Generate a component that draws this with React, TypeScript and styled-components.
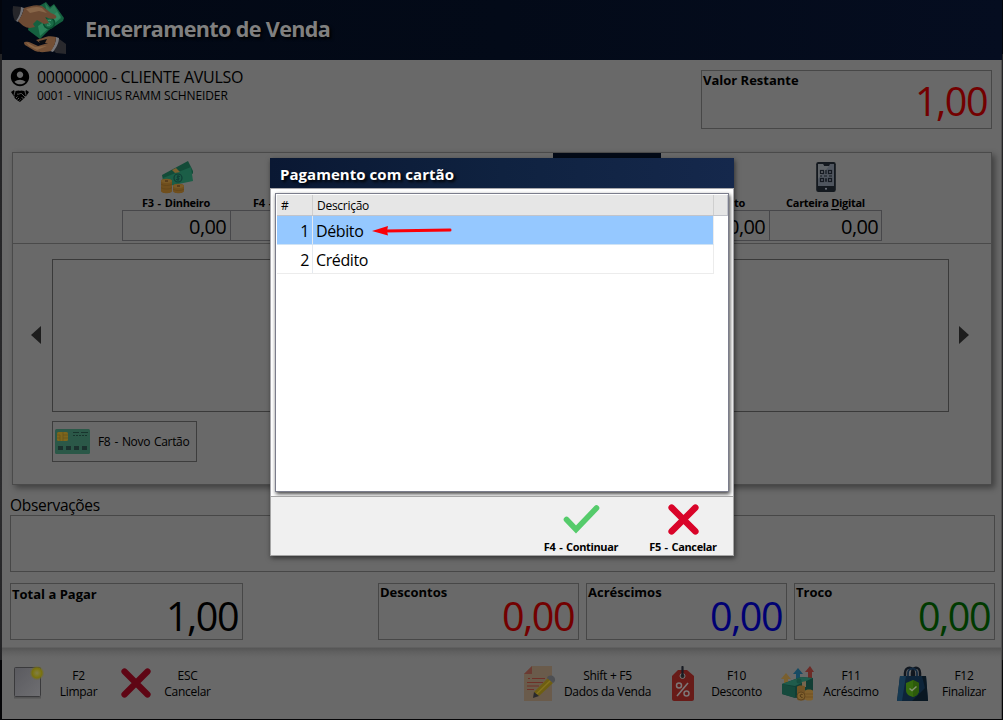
import React from 'react';
import styled, { createGlobalStyle } from 'styled-components';
import { MdAccountCircle } from 'react-icons/md';

const GlobalStyle = createGlobalStyle`
  * {
    box-sizing: border-box;
  }
  body {
    margin: 0;
    background: #000;
    font-family: 'Open Sans', 'Noto Sans', sans-serif;
    overflow: hidden;
  }
  svg {
    display: block;
  }
`;

// Window frame
const Frame = styled.div`
  position: relative;
  width: 1003px;
  height: 720px;
  padding: 0 1px 1px 2px;
  background: linear-gradient(#02050d 54px, #232325 54px, #2b2b2d 500px, #232325 660px, #050507 660px);
`;

const Screen = styled.div`
  display: flex;
  flex-direction: column;
  height: 719px;
  background: #696969;
  color: #000;
  border-right: 1px solid #515151;
`;

const Header = styled.header`
  display: flex;
  align-items: center;
  flex: none;
  height: 60px;
  width: 1000px;
  padding-left: 10px;
  background: linear-gradient(90deg, #020814, #030a18 50%, #050d20);
`;

const Title = styled.h1`
  margin: -3px 0 0 18px;
  font-size: 21.6px;
  line-height: 30px;
  letter-spacing: -0.66px;
  font-weight: 700;
  color: #808080;
  text-shadow: 2px 2px 3px #000;
`;

const Content = styled.main`
  flex: none;
  height: 588px;
  padding: 5px 5px 0 8px;
  border-bottom: 1px solid #606060;
`;

const TopRow = styled.div`
  display: flex;
  justify-content: space-between;
  height: 87px;
  padding-right: 4px;
`;

const PersonLine = styled.div<{ $size: number; $height: number; $spacing: number }>`
  display: flex;
  align-items: center;
  height: ${(p) => p.$height}px;
  font-size: ${(p) => p.$size}px;
  letter-spacing: ${(p) => p.$spacing}px;
  white-space: nowrap;
`;

const PersonIcon = styled.span`
  display: flex;
  justify-content: center;
  width: 20px;
  margin-right: 7px;

  svg {
    flex: none;
  }
`;

const MoneyBox = styled.div<{ $width: number }>`
  display: flex;
  justify-content: space-between;
  width: ${(p) => p.$width}px;
  height: 57px;
  padding: 0 4px 0 1px;
  border: 1px solid #474747;
`;

const RemainingBox = styled(MoneyBox)`
  height: 59px;
  margin-top: 5px;
`;

const MoneyLabel = styled.span<{ $top?: number }>`
  margin-top: ${(p) => p.$top ?? 0}px;
  font-size: 13px;
  line-height: 17px;
  font-weight: 700;
  white-space: nowrap;
`;

const MoneyValue = styled.span<{ $color?: string; $top?: number }>`
  margin-top: ${(p) => p.$top ?? 7}px;
  font-size: 39.5px;
  line-height: 50px;
  letter-spacing: -1.5px;
  color: ${(p) => p.$color ?? '#000'};
`;

const Panel = styled.section`
  width: 980px;
  height: 333px;
  margin-left: 2px;
  border: 1px solid #4a4a4a;
  box-shadow: 3px 3px 6px rgba(0, 0, 0, 0.4);
`;

const Methods = styled.div`
  display: flex;
  height: 91px;
  padding-left: 109px;
  border-bottom: 1px solid #4a4a4a;
`;

const Method = styled.div<{ $width?: number; $active?: boolean }>`
  display: flex;
  flex-direction: column;
  flex: none;
  width: ${(p) => p.$width ?? 108}px;
  height: 88px;
  padding-top: 3px;
  border-top: 5px solid ${(p) => (p.$active ? '#030a17' : 'transparent')};
`;

const MethodIcon = styled.div`
  display: flex;
  justify-content: center;
  height: 33px;
`;

const MethodName = styled.div<{ $align?: string }>`
  height: 16px;
  padding: 0 24px 0 23px;
  font-size: 11px;
  line-height: 17px;
  font-weight: 700;
  letter-spacing: -0.3px;
  word-spacing: 1.4px;
  text-align: ${(p) => p.$align ?? 'center'};
  white-space: nowrap;
`;

const WideName = styled(MethodName)<{ $words?: number }>`
  padding: 0;
  word-spacing: ${(p) => p.$words ?? 0}px;

  u {
    text-underline-offset: 2px;
  }
`;

const MethodValue = styled.div<{ $last?: boolean }>`
  height: 31px;
  margin-right: ${(p) => (p.$last ? 0 : -1)}px;
  padding-right: ${(p) => (p.$last ? 3 : 4)}px;
  border: 1px solid #47474a;
  font-size: 20px;
  line-height: 32px;
  letter-spacing: -0.65px;
  text-align: right;
`;

const CardsRow = styled.div`
  display: flex;
  align-items: center;
  padding: 15px 22px 0 18px;

  svg {
    margin-bottom: 2px;
  }
`;

const CardList = styled.div`
  width: 897px;
  height: 153px;
  margin: 0 10px 0 11px;
  border: 1px solid #3a3a3a;
`;

const NewCardButton = styled.button`
  display: flex;
  align-items: center;
  width: 145px;
  height: 41px;
  margin: 9px 0 0 39px;
  padding: 0 0 0 2px;
  gap: 8px;
  border: 1px solid #3d3d3d;
  background: none;
  color: #000;
  font-family: inherit;
  font-size: 12px;
  letter-spacing: -0.33px;
  word-spacing: 1.2px;
  white-space: nowrap;
`;

const NotesLabel = styled.label`
  display: block;
  height: 30px;
  padding-top: 9px;
  font-size: 15.5px;
  line-height: 23px;
  letter-spacing: -0.3px;
`;

const Notes = styled.div`
  width: 985px;
  height: 57px;
  border: 1px solid #474747;
`;

const Totals = styled.div`
  display: flex;
  gap: 7px;
  margin-top: 11px;
`;

const Spacer = styled.div<{ $width: number }>`
  width: ${(p) => p.$width}px;
`;

const Footer = styled.footer`
  display: flex;
  flex: 1;
  padding: 18px 0 0 11px;
  background: linear-gradient(#555 0, #606060 4px, #686868 9px, #696969 12px);
`;

const FootButton = styled.div<{ $gap?: number }>`
  display: flex;
  align-items: flex-start;
  height: 37px;
  margin-left: ${(p) => p.$gap ?? 0}px;
`;

const FootIcon = styled.div<{ $width: number; $top?: number }>`
  width: ${(p) => p.$width}px;
  padding-top: ${(p) => p.$top ?? 0}px;
`;

const FootText = styled.div<{ $width: number }>`
  width: ${(p) => p.$width}px;
  margin-top: 2px;
  font-size: 12px;
  line-height: 16px;
  letter-spacing: -0.28px;
  text-align: center;
  white-space: nowrap;
`;

// Dialog
const Dialog = styled.div`
  position: absolute;
  left: 270px;
  top: 158px;
  display: flex;
  flex-direction: column;
  width: 464px;
  height: 398px;
  background: #fff;
  box-shadow: 1px 2px 5px rgba(0, 0, 0, 0.55);
`;

const DialogTitle = styled.div`
  height: 30px;
  padding-left: 10px;
  background: linear-gradient(90deg, #0a1833, #0f2240 50%, #15284c);
  color: #fff;
  font-size: 15px;
  line-height: 32px;
  letter-spacing: 0.04px;
  font-weight: 700;
  text-shadow: 2px 2px 3px #000;
`;

const DialogBody = styled.div`
  height: 309px;
  padding: 4px 4px 0;
  border: 1px solid #a8a8ac;
  border-bottom: 0;
`;

const Grid = styled.div`
  width: 454px;
  height: 299px;
  padding: 1px;
  border: 1px solid #7b7d8c;
  background: #fff;
  box-shadow: 1px 2px 4px rgba(0, 0, 0, 0.75);
`;

const GridHead = styled.div`
  display: grid;
  grid-template-columns: 36px 401px 14px;
  height: 21px;
  width: 451px;
  border-bottom: 1px solid #c2c4ca;
  border-right: 1px solid #c2c4ca;
  background: #e6e6e6;
  font-size: 12px;
  line-height: 22px;
  letter-spacing: -0.28px;
`;

const HeadCell = styled.div`
  height: 20px;
  padding-left: 4px;
  border-right: 1px solid #cfcfcf;

  &:last-child {
    border-right: 0;
  }
`;

const GridRow = styled.div<{ $selected?: boolean }>`
  display: grid;
  grid-template-columns: 36px 401px;
  width: 437px;
  height: 29px;
  background: ${(p) => (p.$selected ? '#95c8ff' : '#fff')};
  border-bottom: 1px solid ${(p) => (p.$selected ? '#cfe3f5' : '#ececec')};
  border-right: 1px solid #ececec;
  font-size: 16px;
  line-height: 31px;
  letter-spacing: -0.4px;
`;

const NumberCell = styled.div`
  height: 28px;
  padding-right: 3px;
  border-right: 1px solid #e4e9ef;
  text-align: right;
`;

const TextCell = styled.div`
  height: 28px;
  padding-left: 3px;
`;

const DialogFooter = styled.div`
  display: flex;
  flex: 1;
  justify-content: flex-end;
  border: 1px solid #a5a5a5;
  background: #f0f0f0;
`;

const DialogAction = styled.div`
  display: flex;
  flex-direction: column;
  align-items: center;
  width: 102px;
  margin-right: -1px;
  padding-top: 6px;
  font-size: 11px;
  line-height: 16px;
  font-weight: 700;
  letter-spacing: -0.35px;
  word-spacing: 1.2px;
  white-space: nowrap;

  &:first-child {
    margin-right: 0;
  }
`;

const ActionIcon = styled.div`
  display: flex;
  align-items: center;
  height: 32px;
  margin-bottom: 4px;
`;

const Pointer = styled.svg`
  position: absolute;
  left: 101px;
  top: 66px;
`;

const HandsLogo = () => (
  <svg width="55" height="56" viewBox="0 0 55 56">
    <path d="M20 8 34 0l4 5 4-3 10 14-1 3-14 9-9 9-12-9z" fill="#15603f" />
    <path d="M33 1l5 6 4-4 7 12-12 8z" fill="#2a7a55" />
    <path d="M26 24l10-7 9-7 4 6-12 10-9 8z" fill="#349167" opacity=".7" />
    <circle cx="37" cy="21" r="5.5" fill="#1a6b47" stroke="#0b4d30" strokeWidth="1.5" />
    <path d="M39 18.500c-4-1-4 2-2 2.500s2 3-2 2" fill="none" stroke="#4d9c7a" />
    <path d="M1 4l9 1-2 12-5 2c-2-4-3-9-2-15z" fill="#26262a" />
    <path d="M9 5l3 1c-1 5-3 9-6 14l-2-1c3-4 5-9 5-14z" fill="#707075" />
    <path d="M12 6c6-2 12-4 18-2l9 7c5 2 6 3 5 5-3 2-8 0-11-1l4 6-5 1-7-4-4 4 2 3-5 1c-5 0-8-3-12-7 3-4 5-8 6-13z" fill="#6c4a33" />
    <path d="M14 7c7-2 11-3 16-1l5 5-8-2-9 2z" fill="#876548" />
    <path d="M46 36l8 6v10l-10-1-4-4c3-3 5-7 6-11z" fill="#29292d" />
    <path d="M44 35l3 1c0 5-3 10-6 14l-3-1c4-4 6-9 6-14z" fill="#77777b" />
    <path d="M44 35c-5-1-9-1-13 1l-7 2 4 3 8 0-10 3-9-4c-5-1-6 0-4 3l10 6c6 2 11 1 16 0 3-4 5-9 5-14z" fill="#735036" />
    <path d="M14 40l9 5 12-1-10 4-8-4z" fill="#977150" opacity=".65" />
    <path d="M27 39l8-2-2 4-5 1z" fill="#080b10" />
  </svg>
);

const HandshakeIcon = () => (
  <svg width="18" height="13" viewBox="0 0 18 13">
    <path d="M0 3 3 1l2 5-2 1.500zM18 3l-3-2-2 5 2 1.500z" fill="#000" />
    <path d="M4.500 2 8 1.500l1 .5 1-.5 3.500.5 1 4.500-1 2.500-3.500 3L9 13l-2.500-1.500L3.500 9l0-3z" fill="#000" />
    <path d="M3.800 2.500 3 6.500M14.200 2.500l.8 4" stroke="#696969" strokeWidth=".8" />
    <path d="M6 5c1.500 1 3-1 4.500-.5L14 8M5 9l1.500-1.500M6.500 10.500 8 9M8.500 11.500l1-1M10.500 8l2 2" fill="none" stroke="#696969" strokeWidth=".8" />
  </svg>
);

const CashIcon = () => (
  <svg width="34" height="33" viewBox="-1 0 34 33">
    <path d="M2 14 28 0l6 12-30 13z" fill="#134b38" />
    <path d="M3 17 31 6l2 14-29 6z" fill="#1b5e47" />
    <circle cx="18" cy="17" r="4" fill="none" stroke="#103d35" strokeWidth="1.200" />
    <path d="M20 15.500c-3-1-4 1-2 1.500s2 2-2 1.500M18 14v6" fill="none" stroke="#103d35" />
    <path d="M12 9l4-2 4 4-5 1z" fill="#7c602f" />
    <path d="M1 20c0-3 11-3 11 0v10c0 3-11 3-11 0z" fill="#704f1d" />
    <ellipse cx="6.500" cy="20" rx="5.500" ry="2" fill="#7a5a26" />
    <path d="M1 23c2 2 9 2 11 0M1 26.500c2 2 9 2 11 0" fill="none" stroke="#604418" strokeWidth=".7" />
    <path d="M13 25c0-3 11-3 11 0v5c0 3-11 3-11 0z" fill="#704f1d" />
    <ellipse cx="18.500" cy="25" rx="5.500" ry="2" fill="#7a5a26" />
    <path d="M13 28c2 2 9 2 11 0" fill="none" stroke="#604418" strokeWidth=".7" />
    <path d="M5 20h3M17 25h3" stroke="#503619" strokeWidth="1.500" />
  </svg>
);

const PhoneIcon = () => (
  <svg width="20" height="31" viewBox="0 -1 20 31">
    <rect x=".2" width="19.600" height="30" rx="2.200" fill="#14191f" />
    <path d="M2 2h5l1 2h5l1-2h4v22H2z" fill="#50565f" />
    <path d="M2 2h5l1 2h5l-11 13z" fill="#606468" />
    <g fill="none" stroke="#151a21" strokeWidth="1.200">
      <rect x="4.500" y="8.500" width="3" height="3" />
      <rect x="12.500" y="8.500" width="3" height="3" />
      <rect x="4.500" y="16.500" width="3" height="3" />
      <rect x="12.500" y="16.500" width="3" height="3" />
      <path d="M10 8v4M8 14h3M4 14h2M13 14h3M10 16v4M9 18h2" />
    </g>
    <circle cx="10" cy="26.700" r="1" fill="#727780" />
  </svg>
);

const CardIcon = () => (
  <svg width="35" height="25" viewBox="0 0 35 25">
    <rect width="35" height="25" rx="1.500" fill="#2b5848" />
    <rect x="2" y="3" width="11" height="9" rx="1.500" fill="#7d661c" />
    <path d="M2 6h3v6M2 9h3M8 3v9M8 6h5M8 9h5" fill="none" stroke="#64511a" strokeWidth=".7" />
    <path d="M18 3.500h6M26 3.500h7" stroke="#18342d" />
    <path d="M18 6.500h15" stroke="#18342d" strokeDasharray="2 1" />
    <path d="M3 17h5v4H3zM11 17h5v4h-5zM19 17h5v4h-5zM27 17h5v4h-5z" fill="#1b312e" />
  </svg>
);

const CrossIcon = ({ color, size }: { color: string; size: number }) => (
  <svg width={size} height={size} viewBox="0 0 30 30">
    <path d="M3.500 3.500l23 23M26.500 3.500l-23 23" stroke={color} strokeWidth="6.200" strokeLinecap="round" />
  </svg>
);

const CheckIcon = () => (
  <svg width="37" height="30" viewBox="0 0 37 30">
    <path d="M3.500 15.500 13 25.500 33.500 4" fill="none" stroke="#55cb6b" strokeWidth="5.600" strokeLinecap="round" />
  </svg>
);

const ClearIcon = () => (
  <svg width="31" height="34" viewBox="0 0 31 34">
    <defs>
      <linearGradient id="paper" x1="0" y1="0" x2="1" y2="1">
        <stop offset="0" stopColor="#5a5a5f" />
        <stop offset="1" stopColor="#6f6f72" />
      </linearGradient>
      <radialGradient id="glow">
        <stop offset="0" stopColor="#807e4a" />
        <stop offset=".3" stopColor="#7f7a2a" />
        <stop offset=".65" stopColor="#79720c" />
        <stop offset="1" stopColor="#6f6a38" stopOpacity="0" />
      </radialGradient>
    </defs>
    <path d="M1 31.500h27" stroke="#555" strokeWidth="2" />
    <rect x="1.500" y="1.500" width="26" height="29" rx="1" fill="url(#paper)" stroke="#3a3a3c" />
    <circle cx="24" cy="7" r="7.500" fill="url(#glow)" />
  </svg>
);

const NoteIcon = () => (
  <svg width="32" height="35" viewBox="0 0 32 35">
    <path d="M8 0h20v35H0V8z" fill="#6a5b4b" />
    <path d="M8 0v8H0z" fill="#6b3b33" />
    <path d="M4 12.500h2M8 12.500h13M3 16.500h16M3 20h12M3 23.500h7" stroke="#6e3027" strokeWidth="1.200" />
    <path d="M10 26 24 12l5 5-14 13z" fill="#6e5e12" />
    <path d="M12.500 28 26.500 14.500" stroke="#85731c" strokeWidth="1.500" />
    <path d="M10 26l-1 6 6-2z" fill="#29292c" />
    <path d="M23 12c1-3 5-3 7-1s1 5-1 6z" fill="#4d4f53" />
  </svg>
);

const TagIcon = () => (
  <svg width="24" height="35" viewBox="0 0 24 35">
    <path d="M7 4h9l7 6v23c0 1-1 2-2 2H3c-1 0-2-1-2-2V10z" fill="#681b18" />
    <circle cx="11.500" cy="10" r="2.500" fill="#222" stroke="#7c7777" />
    <path d="M11.500 1v8" stroke="#181b23" strokeWidth="2.200" strokeLinecap="round" />
    <path d="M17 17 6 30" stroke="#7d7777" strokeWidth="1.600" />
    <circle cx="8" cy="19.500" r="2.500" fill="none" stroke="#7d7777" strokeWidth="1.500" />
    <circle cx="15.500" cy="27.500" r="2.500" fill="none" stroke="#7d7777" strokeWidth="1.500" />
  </svg>
);

const RaiseIcon = () => (
  <svg width="34" height="35" viewBox="0 0 34 35">
    <path d="M0 13l5-6 5 6H7v8H3V13z" fill="#7a602f" />
    <path d="M12 8l5-6 5 6h-3v9h-4V8z" fill="#174b64" />
    <path d="M24 6l5-6 4 6h-2v11h-4V6z" fill="#6d2b26" />
    <path d="M1 18 20 11l12 1v15L15 32 1 28z" fill="#123e35" />
    <path d="M1 18 20 11l12 1-18 8z" fill="#205c4c" />
    <path d="M1 18l13 3v11L1 28z" fill="#164a3d" />
    <circle cx="18" cy="15" r="2.500" fill="#184e40" />
    <path d="M21 16l4-1v6h-4z" fill="#77664f" />
    <path d="M16 21c0-2 8-2 8 0v12c0 2-8 2-8 0z" fill="#725325" />
    <path d="M24 25c0-2 8-2 8 0v8c0 2-8 2-8 0z" fill="#80602c" />
    <path d="M24 28h8M24 31h8" stroke="#6a4c20" strokeWidth=".7" />
    <circle cx="20" cy="30" r="4" fill="#80602c" stroke="#5a3f1a" strokeWidth=".8" />
    <path d="M21.500 28.500c-3-1-3 3 0 3" fill="none" stroke="#4a3214" />
  </svg>
);

const BagIcon = () => (
  <svg width="32" height="35" viewBox="0 0 32 35">
    <path d="M8 13V7c0-7 9-7 9 0v3M15 12V7c0-7 8-7 8 0v6" fill="none" stroke="#11171f" strokeWidth="2.500" />
    <path d="M11 13V7c0-6 9-6 9 0v5" fill="none" stroke="#132a41" strokeWidth="1.800" />
    <path d="M3 10h26l2 25H0z" fill="#0d2439" />
    <path d="M3 10h6L5 35H0z" fill="#153851" />
    <path d="M25 10h4l2 25H15L28 22z" fill="#091722" />
    <path d="M9 17l7-3 6 3v7c0 4-3 6-6 7-4-1-7-3-7-7z" fill="#356b0d" />
    <path d="M16 14l6 3v7c0 4-3 6-6 7z" fill="#2d5b0b" />
    <path d="M12.500 22.500l2.500 2 4.500-4" fill="none" stroke="#839270" strokeWidth="1.500" />
  </svg>
);

const options = [
  { id: 1, name: 'Débito' },
  { id: 2, name: 'Crédito' },
];

const App: React.FC = () => {
  const selected = 1;

  return (
    <Frame>
      <GlobalStyle />
      <Screen>
        <Header>
          <HandsLogo />
          <Title>Encerramento de Venda</Title>
        </Header>

        <Content>
          <TopRow>
            <div>
              <PersonLine $size={16} $height={23} $spacing={-0.28}>
                <PersonIcon>
                  <MdAccountCircle size={22} />
                </PersonIcon>
                00000000 - CLIENTE AVULSO
              </PersonLine>
              <PersonLine $size={12} $height={15} $spacing={-0.12}>
                <PersonIcon>
                  <HandshakeIcon />
                </PersonIcon>
                0001 - VINICIUS RAMM SCHNEIDER
              </PersonLine>
            </div>
            <RemainingBox $width={291}>
              <MoneyLabel $top={1}>Valor Restante</MoneyLabel>
              <MoneyValue $color="#730000" $top={5}>1,00</MoneyValue>
            </RemainingBox>
          </TopRow>

          <Panel>
            <Methods>
              <Method>
                <MethodIcon>
                  <CashIcon />
                </MethodIcon>
                <WideName $words={1.4}>F3 - Dinheiro</WideName>
                <MethodValue>0,00</MethodValue>
              </Method>
              <Method $width={107}>
                <MethodIcon />
                <MethodName $align="left">F4 -</MethodName>
                <MethodValue />
              </Method>
              <Method>
                <MethodIcon />
                <MethodName />
                <MethodValue />
              </Method>
              <Method>
                <MethodIcon />
                <MethodName />
                <MethodValue />
              </Method>
              <Method $active>
                <MethodIcon />
                <MethodName />
                <MethodValue />
              </Method>
              <Method>
                <MethodIcon />
                <MethodName $align="right">to</MethodName>
                <MethodValue>0,00</MethodValue>
              </Method>
              <Method $width={113}>
                <MethodIcon>
                  <PhoneIcon />
                </MethodIcon>
                <WideName>
                  Carteira <u>D</u>igital
                </WideName>
                <MethodValue $last>0,00</MethodValue>
              </Method>
            </Methods>

            <CardsRow>
              <svg width="10" height="18" viewBox="0 0 10 18">
                <path d="M10 0v18L0 9z" fill="#1d1d1d" />
              </svg>
              <CardList />
              <svg width="10" height="18" viewBox="0 0 10 18">
                <path d="M0 0v18l10-9z" fill="#1d1d1d" />
              </svg>
            </CardsRow>

            <NewCardButton>
              <CardIcon />
              F8 - Novo Cartão
            </NewCardButton>
          </Panel>

          <NotesLabel>Observações</NotesLabel>
          <Notes />

          <Totals>
            <MoneyBox $width={233}>
              <MoneyLabel $top={2}>Total a Pagar</MoneyLabel>
              <MoneyValue>1,00</MoneyValue>
            </MoneyBox>
            <Spacer $width={121} />
            <MoneyBox $width={201}>
              <MoneyLabel>Descontos</MoneyLabel>
              <MoneyValue $color="#730000">0,00</MoneyValue>
            </MoneyBox>
            <MoneyBox $width={201}>
              <MoneyLabel>Acréscimos</MoneyLabel>
              <MoneyValue $color="#000073">0,00</MoneyValue>
            </MoneyBox>
            <MoneyBox $width={201}>
              <MoneyLabel>Troco</MoneyLabel>
              <MoneyValue $color="#003a00">0,00</MoneyValue>
            </MoneyBox>
          </Totals>
        </Content>

        <Footer>
          <FootButton>
            <FootIcon $width={30}>
              <ClearIcon />
            </FootIcon>
            <FootText $width={71}>
              F2
              <br />
              Limpar
            </FootText>
          </FootButton>
          <FootButton $gap={7}>
            <FootIcon $width={30} $top={2}>
              <CrossIcon color="#5f0514" size={30} />
            </FootIcon>
            <FootText $width={73}>
              ESC
              <br />
              Cancelar
            </FootText>
          </FootButton>
          <FootButton $gap={300}>
            <FootIcon $width={32}>
              <NoteIcon />
            </FootIcon>
            <FootText $width={103}>
              Shift + F5
              <br />
              Dados da Venda
            </FootText>
          </FootButton>
          <FootButton $gap={12}>
            <FootIcon $width={24}>
              <TagIcon />
            </FootIcon>
            <FootText $width={83}>
              F10
              <br />
              Desconto
            </FootText>
          </FootButton>
          <FootButton $gap={3}>
            <FootIcon $width={34}>
              <RaiseIcon />
            </FootIcon>
            <FootText $width={72}>
              F11
              <br />
              Acréscimo
            </FootText>
          </FootButton>
          <FootButton $gap={10}>
            <FootIcon $width={32}>
              <BagIcon />
            </FootIcon>
            <FootText $width={70}>
              F12
              <br />
              Finalizar
            </FootText>
          </FootButton>
        </Footer>
      </Screen>

      <Dialog>
        <DialogTitle>Pagamento com cartão</DialogTitle>
        <DialogBody>
          <Grid>
            <GridHead>
              <HeadCell>#</HeadCell>
              <HeadCell>Descrição</HeadCell>
              <HeadCell />
            </GridHead>
            {options.map((o) => (
              <GridRow key={o.id} $selected={o.id === selected}>
                <NumberCell>{o.id}</NumberCell>
                <TextCell>{o.name}</TextCell>
              </GridRow>
            ))}
          </Grid>
        </DialogBody>
        <DialogFooter>
          <DialogAction>
            <ActionIcon>
              <CheckIcon />
            </ActionIcon>
            F4 - Continuar
          </DialogAction>
          <DialogAction>
            <ActionIcon>
              <CrossIcon color="#d90429" size={31} />
            </ActionIcon>
            F5 - Cancelar
          </DialogAction>
        </DialogFooter>
        {/* Red arrow over the first option */}
        <Pointer width="82" height="14" viewBox="0 0 82 14">
          <path d="M14 7 79 6" stroke="#fb0007" strokeWidth="3" strokeLinecap="round" />
          <path d="M1 7l16-5-1 5 1 4.500z" fill="#fb0007" />
        </Pointer>
      </Dialog>
    </Frame>
  );
};

export default App;
